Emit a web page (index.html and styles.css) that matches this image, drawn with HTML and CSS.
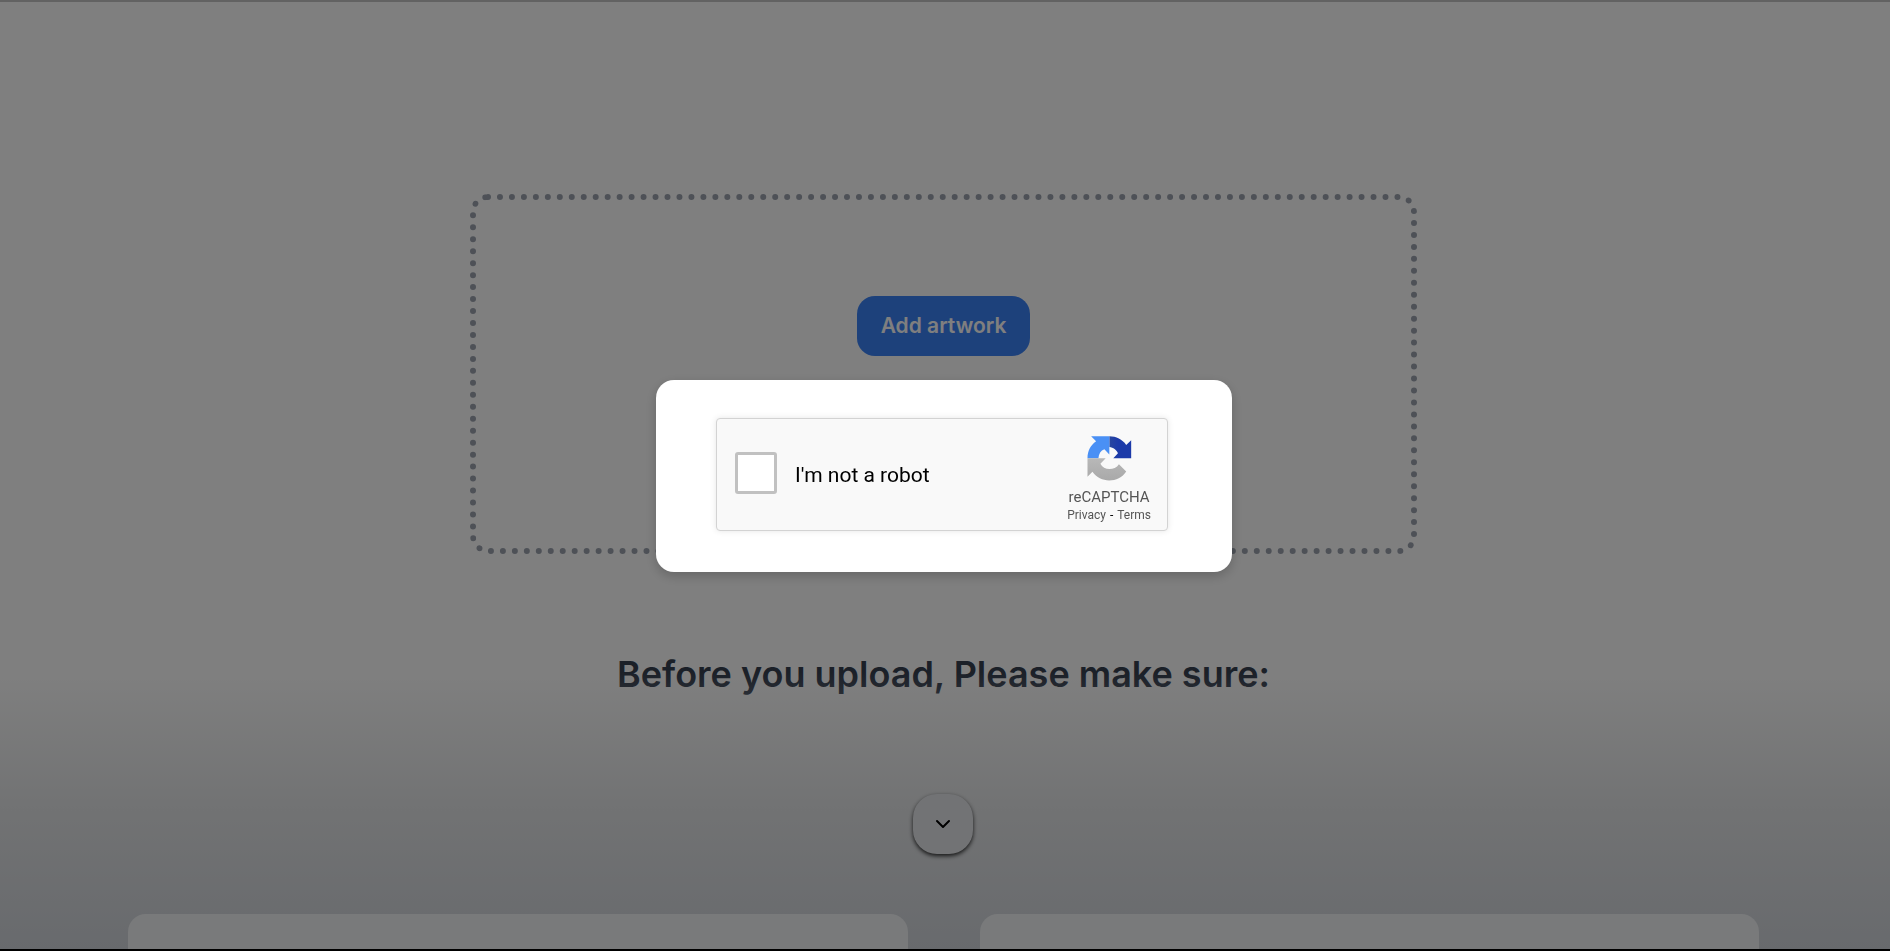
FILE: index.html
```html
<!DOCTYPE html>
<html lang="en">
<head>
<meta charset="utf-8">
<meta name="viewport" content="width=device-width, initial-scale=1">
<title>Add artwork</title>
<link rel="stylesheet" href="styles.css">
</head>
<body>
<main class="page">
  <section class="dropzone">
    <button class="add-button" type="button">Add artwork</button>
  </section>
  <h2 class="heading">Before you upload, Please make sure:</h2>
  <div class="cards">
    <article class="card"></article>
    <article class="card"></article>
  </div>
  <div class="fade">
    <button class="scroll-button" type="button" aria-label="Scroll down">
      <svg width="16" height="10" viewBox="0 0 16 10" fill="none" stroke="#000" stroke-width="2" stroke-linecap="round" stroke-linejoin="round"><path d="M2 2l6 6 6-6"/></svg>
    </button>
  </div>
</main>
<div class="overlay">
  <div class="modal" role="dialog" aria-modal="true" aria-label="Verification">
    <div class="captcha">
      <input class="captcha-box" type="checkbox" id="robot">
      <label class="captcha-label" for="robot">I'm not a robot</label>
      <div class="captcha-brand">
        <svg class="captcha-logo" viewBox="110 47 135 136" aria-hidden="true">
          <defs>
            <linearGradient id="dark"><stop offset="0" stop-color="#28469f"/><stop offset=".4" stop-color="#1c3aa9"/></linearGradient>
            <linearGradient id="grey" x1="0" y1="0" x2="0" y2="1"><stop offset="0" stop-color="#b8b8b8"/><stop offset="1" stop-color="#a9a9a9"/></linearGradient>
          </defs>
          <path fill="url(#dark)" d="M177 48C198 48 216 57 228 74L243 60V114H189L203 99C199 89 189 81 177 80Z"/>
          <path fill="#4a90f5" d="M177 48H122L137 63C121 74 111 92 111 114H144C145 101 151 91 162 87L177 103Z"/>
          <path fill="url(#grey)" d="M111 114H166L150 131C160 152 193 152 206 132L228 154C206 189 150 191 126 155L111 170Z"/>
        </svg>
        <span class="captcha-name">reCAPTCHA</span>
        <span class="captcha-links"><a href="#privacy">Privacy</a><span class="dash">-</span><a href="#terms">Terms</a></span>
      </div>
    </div>
  </div>
</div>
</body>
</html>
```

FILE: styles.css
```css
* { box-sizing: border-box; }

body {
  margin: 0;
  background: #fff;
  font-family: Inter, "Liberation Sans", sans-serif;
}

.page {
  position: relative;
  display: flex;
  flex-direction: column;
  align-items: center;
  height: 100vh;
  padding: 192px 3px 0 0;
  border-top: 2px solid #c4c4c4;
  border-bottom: 2px solid #000;
  overflow: hidden;
}

.dropzone {
  display: flex;
  flex: none;
  justify-content: center;
  align-items: flex-start;
  width: calc(50% + 4px);
  min-width: 320px;
  height: 360px;
  padding-top: 96px;
  border: 6px dotted #9ca3af;
  border-radius: 18px;
}

.add-button {
  height: 60px;
  padding: 0 24px;
  border: 0;
  border-radius: 18px;
  background: #3b82f6;
  color: #fff;
  font: 600 21px/30px Inter, sans-serif;
}

.heading {
  margin: 96px 0 0;
  color: #374151;
  font-size: 36px;
  font-weight: 600;
  line-height: 48px;
}

.cards {
  position: relative;
  z-index: 1;
  display: grid;
  grid-template-columns: 1fr 1fr;
  gap: 72px;
  flex: none;
  width: 100%;
  margin-top: 216px;
  padding: 0 128px;
}

.card {
  height: 240px;
  border-radius: 18px;
  background: #f3f5f7;
}

.fade {
  position: absolute;
  inset: auto 0 0 0;
  display: flex;
  justify-content: center;
  align-items: flex-start;
  height: 276px;
  padding: 121px 5px 0 0;
  background: linear-gradient(rgba(209, 213, 219, 0), #e3e5e7 50%, #d1d5db);
}

.scroll-button {
  display: flex;
  justify-content: center;
  align-items: center;
  width: 60px;
  height: 60px;
  padding: 0;
  border: 0;
  border-radius: 24px;
  background: #e5e7eb;
  box-shadow: 0 2px 4px rgba(0, 0, 0, .8);
}

.overlay {
  position: fixed;
  inset: 0;
  z-index: 2;
  display: flex;
  justify-content: center;
  align-items: center;
  padding: 1px 2px 0 0;
  background: rgba(0, 0, 0, .5);
}

.modal {
  padding: 38px 64px 41px 60px;
  border-radius: 18px;
  background: #fff;
  box-shadow: 0 4px 12px rgba(0, 0, 0, .2);
}

.captcha {
  display: flex;
  align-items: center;
  width: 452px;
  height: 113px;
  padding: 0 16px 0 18px;
  border: 1px solid #d3d3d3;
  border-radius: 4px;
  background: #f9f9f9;
  box-shadow: 0 0 6px rgba(0, 0, 0, .1);
}

.captcha-box {
  appearance: none;
  width: 42px;
  height: 42px;
  margin: 0 18px 4px 0;
  border: 3px solid #c1c1c1;
  border-radius: 3px;
  background: #fff;
}

.captcha-label {
  flex: 1;
  color: #000;
  font: 400 21px/26px Roboto, sans-serif;
}

.captcha-brand {
  display: flex;
  flex-direction: column;
  align-items: center;
  padding-top: 10px;
  color: #555;
  font-family: Roboto, sans-serif;
}

.captcha-logo {
  width: 45px;
  height: 45px;
}

.captcha-name {
  margin-top: 6px;
  font-size: 15px;
  line-height: 20px;
}

.captcha-links {
  display: flex;
  gap: 4px;
  font-size: 12px;
  line-height: 16px;
}

.captcha-links a {
  color: #555;
  text-decoration: none;
}

.dash { color: #000; }
```
